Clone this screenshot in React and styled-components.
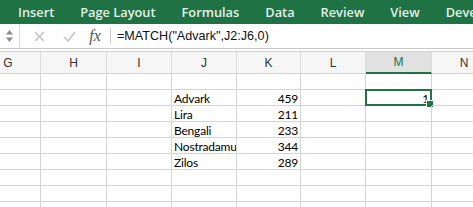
import React from "react";
import styled, { createGlobalStyle } from "styled-components";

const Global = createGlobalStyle`
  html, body { margin: 0; padding: 0; background: #fff; overflow: hidden; }
  body { width: 473px; height: 207px; }
`;

const Page = styled.div`
  width: 473px;
  height: 207px;
  overflow: hidden;
  display: flex;
  flex-direction: column;
`;

const Ribbon = styled.div`
  height: 24px;
  flex-shrink: 0;
  background: #1f7244;
  display: flex;
  align-items: center;
  gap: 26px;
  padding-left: 18px;
  white-space: nowrap;
  overflow: hidden;
`;

const Tab = styled.span`
  color: #e4efe8;
  font-family: "Open Sans", sans-serif;
  font-weight: 600;
  font-size: 12.8px;
  line-height: 24px;
  flex-shrink: 0;
`;

const FormulaBar = styled.div`
  height: 24px;
  flex-shrink: 0;
  display: flex;
  align-items: center;
  border-bottom: 1px solid #c8c8c8;
  margin-bottom: 2px;
`;

const Spinner = styled.div`
  width: 19px;
  height: 24px;
  border-right: 1px solid #dadada;
  display: flex;
  align-items: center;
  justify-content: center;
`;

const IconBox = styled.div`
  width: ${(p) => p.$w}px;
  display: flex;
  align-items: center;
  justify-content: center;
`;

const Fx = styled.span`
  font-family: "Liberation Serif", serif;
  font-style: italic;
  font-size: 16px;
  color: #555;
  width: 30px;
  text-align: center;
`;

const Divider = styled.div`
  width: 1px;
  height: 16px;
  background: #c8c8c8;
  margin-right: 6px;
`;

const Formula = styled.span`
  font-family: "Liberation Sans", sans-serif;
  font-size: 12.6px;
  color: #111;
`;

const Grid = styled.div`
  flex-shrink: 0;
  margin-left: -24px;
  display: grid;
  grid-template-columns: 65px 66px 65px 65px 64px 65px 66px 65px;
  border-top: 1px solid #d4d4d4;
`;

const Head = styled.div`
  background: ${(p) => (p.$active ? "#e1e1e1" : "#f6f6f6")};
  border-right: 1px solid #dcdcdc;
  border-bottom: ${(p) => (p.$active ? "2px solid #217346" : "1px solid #d4d4d4")};
  box-sizing: border-box;
  height: 22px;
  display: flex;
  align-items: center;
  justify-content: center;
  font-family: "Liberation Sans", sans-serif;
  font-size: 12px;
  color: ${(p) => (p.$active ? "#217346" : "#333")};
`;

const Cell = styled.div`
  height: 16px;
  box-sizing: border-box;
  border-right: 1px solid #d4d4d4;
  border-bottom: 1px solid #d4d4d4;
  font-family: "Lato", sans-serif;
  font-size: 12px;
  letter-spacing: -0.2px;
  line-height: 15px;
  padding: 1px 2px 0;
  color: #000;
  text-align: ${(p) => (p.$num ? "right" : "left")};
  white-space: nowrap;
  position: relative;
  overflow: ${(p) => (p.$selected ? "visible" : "hidden")};
  text-overflow: clip;
`;

const Selection = styled.div`
  position: absolute;
  left: -1px;
  top: -1px;
  right: -1px;
  bottom: -1px;
  border: 2px solid #217346;
  pointer-events: none;
`;

const Handle = styled.div`
  position: absolute;
  right: -4px;
  bottom: -4px;
  width: 6px;
  height: 6px;
  background: #217346;
  border: 1px solid #fff;
`;

const cols = ["G", "H", "I", "J", "K", "L", "M", "N"];
const data = [
  null,
  ["Advark", 459],
  ["Lira", 211],
  ["Bengali", 233],
  ["Nostradamus", 344],
  ["Zilos", 289],
  null,
  null,
  null,
];

export default function App() {
  return (
    <Page>
      <Global />
      <Ribbon>
        {["Insert", "Page Layout", "Formulas", "Data", "Review", "View", "Developer"].map((t) => (
          <Tab key={t}>{t}</Tab>
        ))}
      </Ribbon>
      <FormulaBar>
        <Spinner>
          <svg width="9" height="16" viewBox="0 0 9 16">
            <path d="M4.5 2 L8 6.5 H1 Z" fill="#8a8a8a" />
            <path d="M4.5 14 L8 9.5 H1 Z" fill="#8a8a8a" />
          </svg>
        </Spinner>
        <IconBox $w={38}>
          <svg width="11" height="11" viewBox="0 0 11 11">
            <path d="M1 1 L10 10 M10 1 L1 10" stroke="#c4c4c4" strokeWidth="1.6" />
          </svg>
        </IconBox>
        <IconBox $w={22}>
          <svg width="13" height="11" viewBox="0 0 13 11">
            <path d="M1 6 L5 10 L12 1" stroke="#c4c4c4" strokeWidth="1.6" fill="none" />
          </svg>
        </IconBox>
        <Fx>fx</Fx>
        <Divider />
        <Formula>=MATCH("Advark",J2:J6,0)</Formula>
      </FormulaBar>
      <Grid>
        {cols.map((c) => (
          <Head key={c} $active={c === "M"}>{c}</Head>
        ))}
        {data.map((row, r) =>
          cols.map((c) => {
            let content = null;
            let num = false;
            if (row && c === "J") content = row[0];
            if (row && c === "K") {
              content = row[1];
              num = true;
            }
            const selected = r === 1 && c === "M";
            if (selected) {
              content = 1;
              num = true;
            }
            return (
              <Cell key={c + r} $num={num} $selected={selected}>
                {content}
                {selected && (
                  <Selection>
                    <Handle />
                  </Selection>
                )}
              </Cell>
            );
          })
        )}
      </Grid>
    </Page>
  );
}
